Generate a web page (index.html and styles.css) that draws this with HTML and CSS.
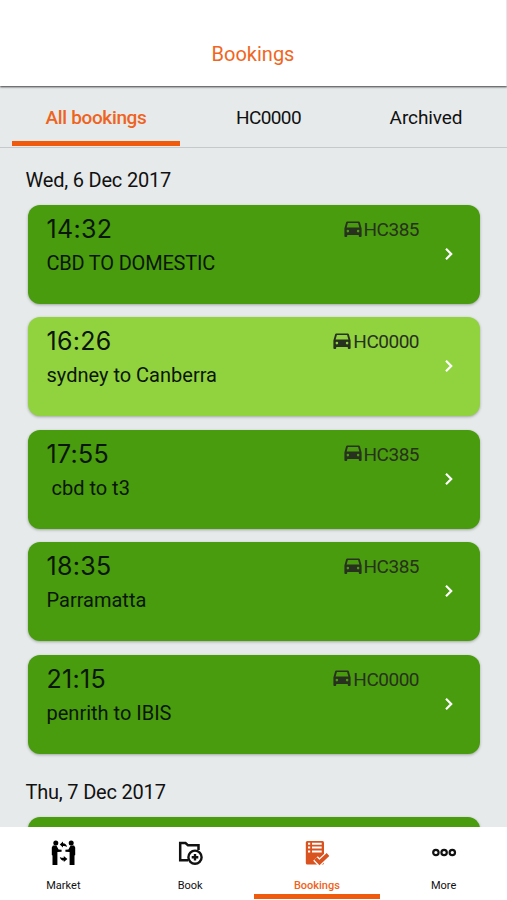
FILE: index.html
```html
<!DOCTYPE html>
<html lang="en">
<head>
    <meta charset="UTF-8">
    <meta name="viewport" content="width=device-width, initial-scale=1.0">
    <title>Bookings</title>
    <link rel="stylesheet" href="styles.css">
</head>
<body>
    <svg class="sprite">
        <symbol id="car" viewBox="0 0 18 16">
            <path fill-rule="evenodd" d="M3.6 0.6h10.8c.8 0 1.4.5 1.6 1.2L17.600 7.500V15c0 .6-.3.9-.9.9h-1c-.6 0-.9-.3-.9-.9v-1.100H3.200V15c0 .6-.3.9-.9.9h-1c-.6 0-.9-.3-.9-.9V7.500l1.600-5.700C2.200 1.100 2.800.6 3.600.6zM3.900 2L2.600 6.600h12.800L14.100 2zM3.900 8.800a1.300 1.300 0 1 0 0 2.600 1.300 1.300 0 0 0 0-2.600zM14.100 8.800a1.300 1.300 0 1 0 0 2.600 1.300 1.300 0 0 0 0-2.600z"/>
        </symbol>
        <symbol id="chevron" viewBox="0 0 8 12">
            <path d="M1 0.800L6.200 6 1 11.200" fill="none" stroke="#fff" stroke-width="2.200"/>
        </symbol>
    </svg>

    <header class="header">
        <h1>Bookings</h1>
    </header>

    <nav class="tabs">
        <a class="tab active">All bookings</a>
        <a class="tab code">HC0000</a>
        <a class="tab">Archived</a>
    </nav>

    <main class="list">
        <section class="day">
            <h2>Wed, 6 Dec 2017</h2>
            <div class="card">
                <div class="info">
                    <div class="time">14:32</div>
                    <div class="route caps">CBD TO DOMESTIC</div>
                </div>
                <div class="car"><svg><use href="#car"/></svg>HC385</div>
                <svg class="chevron"><use href="#chevron"/></svg>
            </div>
            <div class="card light">
                <div class="info">
                    <div class="time">16:26</div>
                    <div class="route">sydney to Canberra</div>
                </div>
                <div class="car"><svg><use href="#car"/></svg>HC0000</div>
                <svg class="chevron"><use href="#chevron"/></svg>
            </div>
            <div class="card">
                <div class="info">
                    <div class="time">17:55</div>
                    <div class="route"> cbd to t3</div>
                </div>
                <div class="car"><svg><use href="#car"/></svg>HC385</div>
                <svg class="chevron"><use href="#chevron"/></svg>
            </div>
            <div class="card">
                <div class="info">
                    <div class="time">18:35</div>
                    <div class="route">Parramatta</div>
                </div>
                <div class="car"><svg><use href="#car"/></svg>HC385</div>
                <svg class="chevron"><use href="#chevron"/></svg>
            </div>
            <div class="card">
                <div class="info">
                    <div class="time">21:15</div>
                    <div class="route">penrith to IBIS</div>
                </div>
                <div class="car"><svg><use href="#car"/></svg>HC0000</div>
                <svg class="chevron"><use href="#chevron"/></svg>
            </div>
        </section>

        <section class="day">
            <h2>Thu, 7 Dec 2017</h2>
            <div class="card"></div>
        </section>
    </main>

    <footer class="bottom-nav">
        <a class="item">
            <svg viewBox="0 0 26 26">
                <circle cx="5.800" cy="2.900" r="2.500"/>
                <circle cx="21.200" cy="2.900" r="2.500"/>
                <path d="M2.900 5.500h3.500l2.200 3.900 3 .4v1.900l-4.200.2V25H5.100v-8.500V25H2.500v-9.500L1.800 15V7.500zM24.100 5.500h-3.500l-2.200 3.900-3 .4v1.900l4.200.2V25h2.300v-8.500V25h2.600v-9.500l.7-.5V7.500z"/>
                <path d="M9.800 4.600l3.200-3v1.600c2.200 0 3.400 1.200 4 3.700-1.400-.8-2.600-1-4-.8v1.500zM17.400 19l-3.600 3.100v-1.600c-2 0-3.200-1-4-3.600 1.400.7 2.700 1 4 .8v-1.600z"/>
            </svg>
            <span>Market</span>
        </a>
        <a class="item">
            <svg viewBox="0 0 26 26">
                <path d="M11 20.200H3.200V3h5.300L11 5.300h10.500V10" fill="none" stroke="#111" stroke-width="2.500"/>
                <circle cx="18" cy="17.200" r="6.600" fill="none" stroke="#111" stroke-width="2.400"/>
                <path d="M18 13.900v6.600M14.700 17.200h6.600" stroke="#111" stroke-width="2.400"/>
            </svg>
            <span>Book</span>
        </a>
        <a class="item active">
            <svg viewBox="0 0 26 26">
                <rect x="1.800" y="1" width="18.200" height="23.500" rx="1.500"/>
                <path d="M4 3.800h2.200M8 3.800h9.700M4 7.600h2.200M8 7.600h9.700M4 11.400h2.200M8 11.400h9.700" stroke="#fff" stroke-width="2"/>
                <path class="check-edge" d="M11.500 18.500l4 4L24 14.500"/>
                <path class="check" d="M11.500 18.500l4 4L24 14.500"/>
            </svg>
            <span>Bookings</span>
        </a>
        <a class="item">
            <svg viewBox="0 0 26 26" fill="none" stroke="#111" stroke-width="2.200">
                <circle cx="4.900" cy="12.500" r="2.700"/>
                <circle cx="13.100" cy="12.500" r="2.700"/>
                <circle cx="21.300" cy="12.500" r="2.700"/>
            </svg>
            <span>More</span>
        </a>
    </footer>
</body>
</html>
```

FILE: styles.css
```css
* { box-sizing: border-box; }
body {
    margin: 0;
    height: 900px;
    display: flex;
    flex-direction: column;
    overflow: hidden;
    background-color: #e6eaeb;
    color: #111;
    font-family: Roboto, sans-serif;
}
.sprite { display: none; }

/* header */
.header {
    height: 86px;
    flex-shrink: 0;
    padding-top: 41px;
    background-color: #fff;
    border-right: 1px solid #e6e6e6;
    box-shadow: 0 1px 2px rgba(0, 0, 0, 0.75);
    text-align: center;
}
h1 {
    margin: 0;
    font-size: 20px;
    line-height: 26px;
    font-weight: 400;
    color: #f16522;
}

/* tabs */
.tabs {
    height: 62px;
    flex-shrink: 0;
    display: grid;
    grid-template-columns: 168px 177px 138px;
    padding-left: 12px;
    border-bottom: 1px solid #c5c9cb;
}
.tab {
    padding-top: 19px;
    font-size: 19px;
    line-height: 26px;
    letter-spacing: -0.1px;
    text-align: center;
}
.tab.code { letter-spacing: -0.6px; }
.tab.active {
    height: 60px;
    border-bottom: 5px solid #ef5a0c;
    color: #ef6320;
    font-weight: 500;
    letter-spacing: -0.35px;
}

/* bookings list */
.list {
    flex: 1;
    overflow: hidden;
    padding: 0 27px 0 28px;
}
.day { padding-top: 19px; }
.day + .day { padding-top: 12px; }
h2 {
    margin: 0 0 11px -2.500px;
    font-size: 20px;
    line-height: 27px;
    font-weight: 400;
    letter-spacing: -0.200px;
}
.card {
    height: 99px;
    margin-bottom: 13.400px;
    display: flex;
    align-items: flex-start;
    padding: 8px 27px 0 18.500px;
    background-color: #489c0d;
    border-radius: 12px;
    box-shadow: 0 1px 3px rgba(0, 0, 0, 0.3);
    color: #0c1608;
}
.card.light { background-color: #91d33f; }
.info { flex: 1; }
.time {
    font-family: Inter, sans-serif;
    font-size: 25px;
    line-height: 32px;
    letter-spacing: 0.300px;
}
.route {
    margin-top: 5px;
    font-size: 20px;
    line-height: 27px;
    white-space: pre;
}
.route.caps { letter-spacing: -0.200px; }
.car {
    display: flex;
    align-items: center;
    gap: 2px;
    margin-right: 26px;
    padding-top: 4px;
    font-size: 19px;
    line-height: 26px;
    letter-spacing: -0.5px;
    color: #28301f;
}
.car svg {
    width: 18px;
    height: 16px;
    margin-top: -3px;
    fill: #28301f;
}
.chevron {
    width: 8px;
    height: 12px;
    margin-top: 35px;
}

/* bottom navigation */
.bottom-nav {
    height: 73px;
    flex-shrink: 0;
    display: grid;
    grid-template-columns: repeat(4, 1fr);
    background-color: #fff;
}
.item {
    height: 72px;
    display: flex;
    flex-direction: column;
    align-items: center;
    padding-top: 13px;
    font-size: 11px;
    line-height: 16px;
}
.item svg {
    width: 26px;
    height: 26px;
    margin-bottom: 12px;
}
.item.active {
    border-bottom: 5px solid #ef5a0c;
    color: #ef6320;
    font-weight: 500;
}
.item.active svg { fill: #d95320; }
.check, .check-edge {
    fill: none;
    stroke: #d95320;
    stroke-width: 3.800;
}
.check-edge {
    stroke: #fff;
    stroke-width: 6.500;
}
```
